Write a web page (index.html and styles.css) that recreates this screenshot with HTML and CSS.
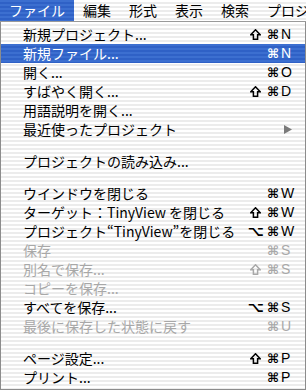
FILE: index.html
```html
<!DOCTYPE html>
<html lang="ja">
<head>
<meta charset="utf-8">
<link rel="stylesheet" href="styles.css">
</head>
<body>
<div class="screen">
  <div class="menubar">
    <span class="mb-item active">ファイル</span>
    <span class="mb-item">編集</span>
    <span class="mb-item">形式</span>
    <span class="mb-item">表示</span>
    <span class="mb-item">検索</span>
    <span class="mb-item last">プロジェクト</span>
  </div>
  <div class="menu">
    <div class="row"><span class="label">新規プロジェクト...</span><span class="sc"><svg class="shift" viewBox="0 0 11 11"><polygon points="5.5,0.8 10.2,5.8 7.6,5.8 7.6,10.2 3.4,10.2 3.4,5.8 0.8,5.8"/></svg><span class="m">⌘</span><span class="key">N</span></span></div>
    <div class="row hl"><span class="label">新規ファイル...</span><span class="sc"><span class="m">⌘</span><span class="key">N</span></span></div>
    <div class="row"><span class="label">開く...</span><span class="sc"><span class="m">⌘</span><span class="key">O</span></span></div>
    <div class="row"><span class="label">すばやく開く...</span><span class="sc"><svg class="shift" viewBox="0 0 11 11"><polygon points="5.5,0.8 10.2,5.8 7.6,5.8 7.6,10.2 3.4,10.2 3.4,5.8 0.8,5.8"/></svg><span class="m">⌘</span><span class="key">D</span></span></div>
    <div class="row"><span class="label">用語説明を開く...</span></div>
    <div class="row"><span class="label">最近使ったプロジェクト</span><svg class="arrow" width="8" height="9" viewBox="0 0 8 9"><polygon points="0,0 8,4.5 0,9" fill="#7a7a7a"/></svg></div>
    <div class="sep"></div>
    <div class="row"><span class="label">プロジェクトの読み込み...</span></div>
    <div class="sep"></div>
    <div class="row"><span class="label">ウインドウを閉じる</span><span class="sc"><span class="m">⌘</span><span class="key">W</span></span></div>
    <div class="row"><span class="label">ターゲット：TinyView を閉じる</span><span class="sc"><svg class="shift" viewBox="0 0 11 11"><polygon points="5.5,0.8 10.2,5.8 7.6,5.8 7.6,10.2 3.4,10.2 3.4,5.8 0.8,5.8"/></svg><span class="m">⌘</span><span class="key">W</span></span></div>
    <div class="row"><span class="label">プロジェクト“TinyView”を閉じる</span><span class="sc"><span class="m opt">⌥</span><span class="m">⌘</span><span class="key">W</span></span></div>
    <div class="row dis"><span class="label">保存</span><span class="sc"><span class="m">⌘</span><span class="key">S</span></span></div>
    <div class="row dis"><span class="label">別名で保存...</span><span class="sc"><svg class="shift" viewBox="0 0 11 11"><polygon points="5.5,0.8 10.2,5.8 7.6,5.8 7.6,10.2 3.4,10.2 3.4,5.8 0.8,5.8"/></svg><span class="m">⌘</span><span class="key">S</span></span></div>
    <div class="row dis"><span class="label">コピーを保存...</span></div>
    <div class="row"><span class="label">すべてを保存...</span><span class="sc"><span class="m opt">⌥</span><span class="m">⌘</span><span class="key">S</span></span></div>
    <div class="row dis"><span class="label">最後に保存した状態に戻す</span><span class="sc"><span class="m">⌘</span><span class="key">U</span></span></div>
    <div class="sep"></div>
    <div class="row"><span class="label">ページ設定...</span><span class="sc"><svg class="shift" viewBox="0 0 11 11"><polygon points="5.5,0.8 10.2,5.8 7.6,5.8 7.6,10.2 3.4,10.2 3.4,5.8 0.8,5.8"/></svg><span class="m">⌘</span><span class="key">P</span></span></div>
    <div class="row"><span class="label">プリント...</span><span class="sc"><span class="m">⌘</span><span class="key">P</span></span></div>
  </div>
</div>
</body>
</html>
```
FILE: styles.css
```css
html, body {
  margin: 0;
  padding: 0;
  background: #ffffff;
}
.screen {
  width: 306px;
  height: 390px;
  overflow: hidden;
  font-family: "Noto Sans CJK JP", "Liberation Sans", sans-serif;
  font-size: 14px;
  color: #000;
}
.menubar {
  height: 21px;
  border-bottom: 1px solid #9a9a9a;
  display: flex;
  white-space: nowrap;
  overflow: hidden;
  background: repeating-linear-gradient(to bottom, #ffffff 0, #ffffff 2px, #ececec 2px, #ececec 4px);
}
.mb-item {
  padding: 0 9px 0 9px;
  line-height: 21px;
  flex: none;
}
.mb-item.last {
  flex: 1;
  min-width: 0;
  overflow: hidden;
  padding-right: 0;
}
.mb-item.active {
  color: #fff;
  background: repeating-linear-gradient(to bottom, #3c6fd0 0, #3c6fd0 2px, #2f61c6 2px, #2f61c6 4px);
}
.menu {
  border-left: 1px solid #8c8c8c;
  border-right: 1px solid #8c8c8c;
  border-bottom: 1px solid #8c8c8c;
  padding: 3px 0 0 0;
  box-sizing: border-box;
  height: 368px;
  background: repeating-linear-gradient(to bottom, #ffffff 0, #ffffff 2px, #ececec 2px, #ececec 4px);
}
.row {
  height: 19px;
  display: flex;
  align-items: center;
  padding: 0 13px 0 22px;
  white-space: nowrap;
  line-height: 19px;
}
.row.hl {
  color: #fff;
  background: repeating-linear-gradient(to bottom, #3c6fd0 0, #3c6fd0 2px, #2f61c6 2px, #2f61c6 4px);
}
.row.dis {
  color: #a8a8a8;
}
.label {
  flex: 1;
}
.sc {
  display: flex;
  align-items: center;
}
.shift {
  width: 11px;
  height: 11px;
  margin-right: 6px;
  fill: none;
  stroke: currentColor;
  stroke-width: 1.5;
  stroke-linejoin: miter;
}
.m {
  font-family: "DejaVu Sans", "Liberation Sans", sans-serif;
  font-size: 13px;
  font-weight: bold;
  margin-right: 2px;
}
.m.opt {
  font-size: 14px;
  margin-right: 3px;
}
.key {
  width: 11px;
  font-family: "Liberation Sans", sans-serif;
  font-size: 14px;
}
.sep {
  height: 13px;
}
```
